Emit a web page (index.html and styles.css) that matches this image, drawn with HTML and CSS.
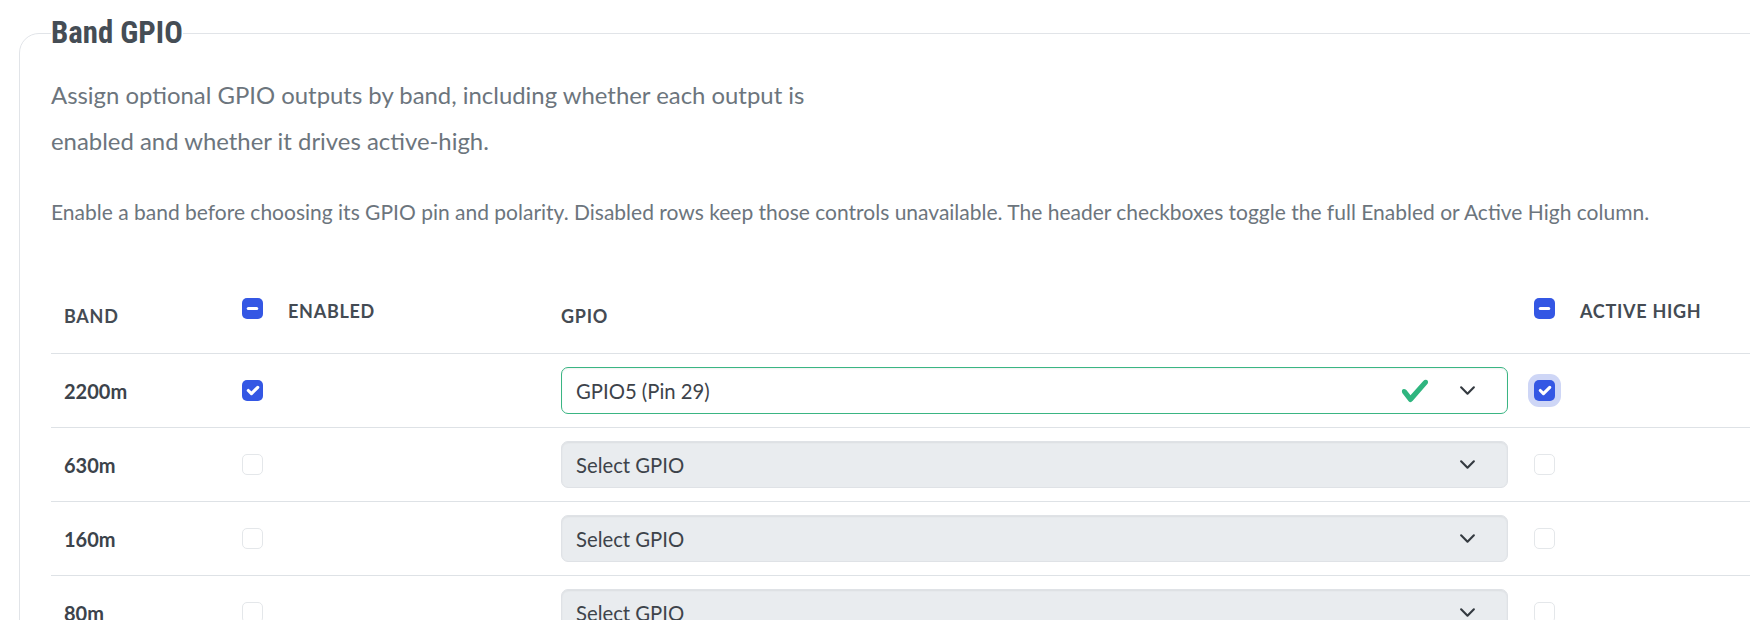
FILE: index.html
```html
<!DOCTYPE html>
<html lang="en">
<head>
<meta charset="utf-8">
<title>Band GPIO</title>
<link rel="stylesheet" href="styles.css">
</head>
<body>
<fieldset class="panel">
  <legend class="panel-title">Band GPIO</legend>
  <p class="desc">Assign optional GPIO outputs by band, including whether each output is enabled and whether it drives active-high.</p>
  <p class="note">Enable a band before choosing its GPIO pin and polarity. Disabled rows keep those controls unavailable. The header checkboxes toggle the full Enabled or Active High column.</p>
  <table class="grid">
    <colgroup>
      <col class="c-band">
      <col class="c-enabled">
      <col class="c-gpio">
      <col class="c-active">
    </colgroup>
    <thead>
      <tr>
        <th><span class="th-text">Band</span></th>
        <th>
          <span class="th-check">
            <span class="cb cb-on"><svg viewBox="0 0 20 20" width="21" height="21"><path d="M6 10h8" fill="none" stroke="#fff" stroke-width="3" stroke-linecap="round"/></svg></span>
            <span class="th-label">Enabled</span>
          </span>
        </th>
        <th><span class="th-text">GPIO</span></th>
        <th>
          <span class="th-check">
            <span class="cb cb-on"><svg viewBox="0 0 20 20" width="21" height="21"><path d="M6 10h8" fill="none" stroke="#fff" stroke-width="3" stroke-linecap="round"/></svg></span>
            <span class="th-label">Active High</span>
          </span>
        </th>
      </tr>
    </thead>
    <tbody>
      <tr>
        <td class="band">2200m</td>
        <td><span class="cb cb-on"><svg viewBox="0 0 20 20" width="21" height="21"><path d="m6 10 3 3 6-6" fill="none" stroke="#fff" stroke-width="3" stroke-linecap="round" stroke-linejoin="round"/></svg></span></td>
        <td>
          <div class="select select-valid">
            <span class="select-text">GPIO5 (Pin 29)</span>
            <svg class="valid-icon" viewBox="0 0 8 8" width="30" height="30"><path fill="#2fb57f" d="M2.3 6.73.6 4.53c-.4-1.04.46-1.4 1.1-.8l1.1 1.4 3.4-3.8c.6-.63 1.6-.27 1.2.7l-4 4.6c-.43.5-.8.4-1.1.1z"/></svg>
            <svg class="chev" viewBox="0 0 16 16" width="17" height="17"><path d="m2 5 6 6 6-6" fill="none" stroke="#343a40" stroke-width="2" stroke-linecap="round" stroke-linejoin="round"/></svg>
          </div>
        </td>
        <td><span class="cb cb-on cb-focus"><svg viewBox="0 0 20 20" width="21" height="21"><path d="m6 10 3 3 6-6" fill="none" stroke="#fff" stroke-width="3" stroke-linecap="round" stroke-linejoin="round"/></svg></span></td>
      </tr>
      <tr>
        <td class="band">630m</td>
        <td><span class="cb cb-off"></span></td>
        <td>
          <div class="select select-disabled">
            <span class="select-text">Select GPIO</span>
            <svg class="chev" viewBox="0 0 16 16" width="17" height="17"><path d="m2 5 6 6 6-6" fill="none" stroke="#343a40" stroke-width="2" stroke-linecap="round" stroke-linejoin="round"/></svg>
          </div>
        </td>
        <td><span class="cb cb-off"></span></td>
      </tr>
      <tr>
        <td class="band">160m</td>
        <td><span class="cb cb-off"></span></td>
        <td>
          <div class="select select-disabled">
            <span class="select-text">Select GPIO</span>
            <svg class="chev" viewBox="0 0 16 16" width="17" height="17"><path d="m2 5 6 6 6-6" fill="none" stroke="#343a40" stroke-width="2" stroke-linecap="round" stroke-linejoin="round"/></svg>
          </div>
        </td>
        <td><span class="cb cb-off"></span></td>
      </tr>
      <tr>
        <td class="band">80m</td>
        <td><span class="cb cb-off"></span></td>
        <td>
          <div class="select select-disabled">
            <span class="select-text">Select GPIO</span>
            <svg class="chev" viewBox="0 0 16 16" width="17" height="17"><path d="m2 5 6 6 6-6" fill="none" stroke="#343a40" stroke-width="2" stroke-linecap="round" stroke-linejoin="round"/></svg>
          </div>
        </td>
        <td><span class="cb cb-off"></span></td>
      </tr>
    </tbody>
  </table>
</fieldset>
</body>
</html>
```

FILE: styles.css
```css
html, body {
  margin: 0;
  padding: 0;
  background: #ffffff;
  overflow: hidden;
}

body {
  font-family: Lato, "Noto Sans", "Liberation Sans", sans-serif;
  color: #3e454d;
}

.panel {
  margin: 15px 0 0 19px;
  width: 1850px;
  box-sizing: border-box;
  min-width: 0;
  border: 1px solid #e1e4e8;
  border-radius: 20px;
  padding: 0 0 40px 31px;
}

.panel-title {
  padding: 0;
  font-family: "Liberation Sans Narrow", "Roboto Condensed", "Liberation Sans", sans-serif;
  font-weight: 700;
  font-size: 30.8px;
  line-height: 36px;
  color: #454d55;
}

.desc {
  margin: 20.5px 0 0;
  max-width: 815px;
  font-size: 23.9px;
  line-height: 46px;
  color: #6c757d;
}

.note {
  margin: 34.5px 0 0;
  font-size: 21px;
  line-height: 28px;
  color: #6c757d;
}

.grid {
  margin-top: 42px;
  border-collapse: collapse;
  table-layout: fixed;
  width: 1770px;
}

.c-band { width: 178px; }
.c-enabled { width: 319px; }
.c-gpio { width: 973px; }
.c-active { width: 300px; }

.grid th {
  text-align: left;
  vertical-align: bottom;
  padding: 30px 13px 24px;
  border-bottom: 1px solid #dee2e6;
  font-weight: 700;
  font-size: 18px;
  line-height: 26px;
  letter-spacing: 0.04em;
  text-transform: uppercase;
  color: #444b53;
}

.th-text {
  display: block;
}

.th-check {
  display: flex;
  align-items: flex-start;
  gap: 25px;
  margin-bottom: 5px;
}

.grid td {
  padding: 13px;
  height: 47px;
  vertical-align: middle;
  border-bottom: 1px solid #dee2e6;
}

.band {
  font-weight: 700;
  font-size: 20px;
  color: #3c434b;
}

.cb {
  display: block;
  width: 21px;
  height: 21px;
  box-sizing: border-box;
  border-radius: 5px;
  flex: none;
}

.cb svg {
  display: block;
}

.cb-on {
  background: #3457e4;
}

.cb-off {
  background: #ffffff;
  border: 1px solid #e4e7ea;
}

.cb-focus {
  box-shadow: 0 0 0 6px #ced6f6;
}

.select {
  display: flex;
  align-items: center;
  height: 47px;
  box-sizing: border-box;
  padding: 0 31px 0 14px;
  border-radius: 7px;
  box-shadow: inset 0 1px 2px rgba(0, 0, 0, 0.06);
  font-size: 20.3px;
  color: #3d434a;
}

.select-valid {
  background: #ffffff;
  border: 1px solid #3ab583;
}

.select-disabled {
  background: #e9ecef;
  border: 1px solid #dfe2e6;
}

.select-text {
  flex: 1;
}

.valid-icon {
  display: block;
  margin-right: 29px;
}

.chev {
  display: block;
}
```
